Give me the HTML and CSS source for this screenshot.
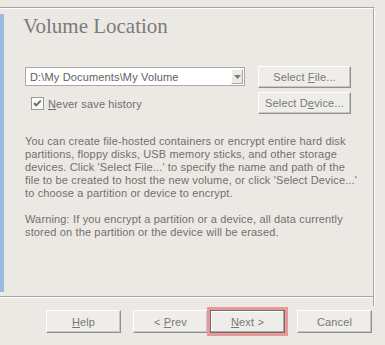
FILE: index.html
```html
<!DOCTYPE html>
<html>
<head>
<meta charset="utf-8">
<link rel="stylesheet" href="styles.css">
</head>
<body>
<div class="win">
  <div class="frame-o">
    <div class="frame-i">
      <div class="mainrow">
        <div class="bitmap"></div>
        <div class="content">
          <div class="title">Volume Location</div>
          <div class="controls">
            <div class="combo">
              <span class="combo-text">D:\My Documents\My Volume</span>
              <span class="combo-btn">
                <svg width="7" height="4" viewBox="0 0 7 4"><polygon points="0,0 7,0 3.5,4" fill="#7a7a7a"/></svg>
              </span>
            </div>
            <button class="btn sel"><span>Select <u>F</u>ile...</span></button>
            <label class="check">
              <svg class="box" width="13" height="13" viewBox="0 0 13 13">
                <rect x="0.5" y="0.5" width="12" height="12" fill="#fbfbfa" stroke="#9a9a9a"/>
                <polyline points="3,6 5.2,8.4 9.8,3.6" fill="none" stroke="#6a6a6a" stroke-width="1.9"/>
              </svg>
              <span><u>N</u>ever save history</span>
            </label>
            <button class="btn sel"><span>Select D<u>e</u>vice...</span></button>
          </div>
          <p class="para">You can create file-hosted containers or encrypt entire hard disk<br>partitions, floppy disks, USB memory sticks, and other storage<br>devices. Click 'Select File...' to specify the name and path of the<br>file to be created to host the new volume, or click 'Select Device...'<br>to choose a partition or device to encrypt.</p>
          <p class="para">Warning: If you encrypt a partition or a device, all data currently<br>stored on the partition or the device will be erased.</p>
        </div>
      </div>
      <div class="sep"></div>
    </div>
  </div>
  <div class="footer">
    <button class="btn foot help"><span><u>H</u>elp</span></button>
    <button class="btn foot prev"><span>&lt; <u>P</u>rev</span></button>
    <button class="btn foot next"><span><u>N</u>ext &gt;</span></button>
    <button class="btn foot cancel"><span>Cancel</span></button>
  </div>
</div>
</body>
</html>
```
FILE: styles.css
```css
html, body {
  margin: 0;
  padding: 0;
  background: #ece9e4;
}
.win {
  width: 385px;
  height: 345px;
  padding-top: 7px;
  box-sizing: border-box;
  overflow: hidden;
  font-family: "Liberation Sans", Arial, sans-serif;
  font-size: 11px;
  letter-spacing: 0.15px;
  color: #707070;
}
.frame-o {
  width: 375px;
  box-sizing: border-box;
  border-top: 1px solid #a4a4a2;
  border-right: 1px solid #ffffff;
}
.frame-i {
  height: 297px;
  border-top: 1px solid #ffffff;
  border-right: 1px solid #a4a4a2;
}
.mainrow {
  display: flex;
  height: 287px;
}
.bitmap {
  width: 4px;
  margin-top: 5px;
  height: 278px;
  background: #9cb9de;
  flex: 0 0 auto;
}
.content {
  flex: 1;
  padding-left: 21px;
}
.title {
  margin: 5px 0 0 -2px;
  font-family: "Liberation Serif", "Times New Roman", serif;
  font-size: 21px;
  line-height: 24px;
  letter-spacing: 0;
  color: #7b7b7b;
}
.controls {
  display: grid;
  grid-template-columns: 220px 93px;
  column-gap: 13px;
  row-gap: 4px;
  margin-top: 28px;
}
.combo {
  box-sizing: border-box;
  margin-top: 1px;
  height: 19px;
  border: 1px solid #a9a9a9;
  background: #ffffff;
  display: flex;
  align-items: center;
  justify-content: space-between;
  padding: 0 1px 0 4px;
}
.combo-text {
  color: #606060;
  white-space: nowrap;
}
.combo-btn {
  box-sizing: border-box;
  width: 12px;
  height: 15px;
  background: #ebeae6;
  border: 1px solid;
  border-color: #ffffff #a8a8a8 #a8a8a8 #ffffff;
  display: flex;
  align-items: center;
  justify-content: center;
}
.btn {
  box-sizing: border-box;
  margin: 0;
  padding: 0;
  background: #eeede9;
  border: 1px solid;
  border-color: #ffffff #8f8f8f #8f8f8f #ffffff;
  box-shadow: inset -1px -1px #c9c7c2;
  font-family: "Liberation Sans", Arial, sans-serif;
  font-size: 11px;
  letter-spacing: 0.15px;
  color: #787878;
  display: flex;
  align-items: center;
  justify-content: center;
  white-space: nowrap;
}
.sel {
  width: 93px;
  height: 22px;
}
.check {
  display: flex;
  align-items: center;
  margin: 5px 0 0 6px;
  height: 13px;
  gap: 4px;
  color: #6f6f6f;
}
.box {
  display: block;
  flex: 0 0 auto;
}
.para {
  margin: 21px 0 0 0;
  line-height: 13px;
  white-space: nowrap;
}
.para + .para {
  margin-top: 13px;
}
.sep {
  border-top: 1px solid #a4a4a2;
  border-bottom: 1px solid #ffffff;
}
.footer {
  display: flex;
  margin-top: 4px;
  padding-left: 46px;
}
.foot {
  width: 75px;
  height: 23px;
}
.prev {
  margin-left: 12px;
}
.next {
  margin-left: 2px;
  border-color: #6e6e6e;
  box-shadow: inset -1px -1px #a9a9a9, inset 1px 1px #ffffff;
  outline: 3px solid #e79898;
  outline-offset: 0;
}
.cancel {
  margin-left: 12px;
}
```
